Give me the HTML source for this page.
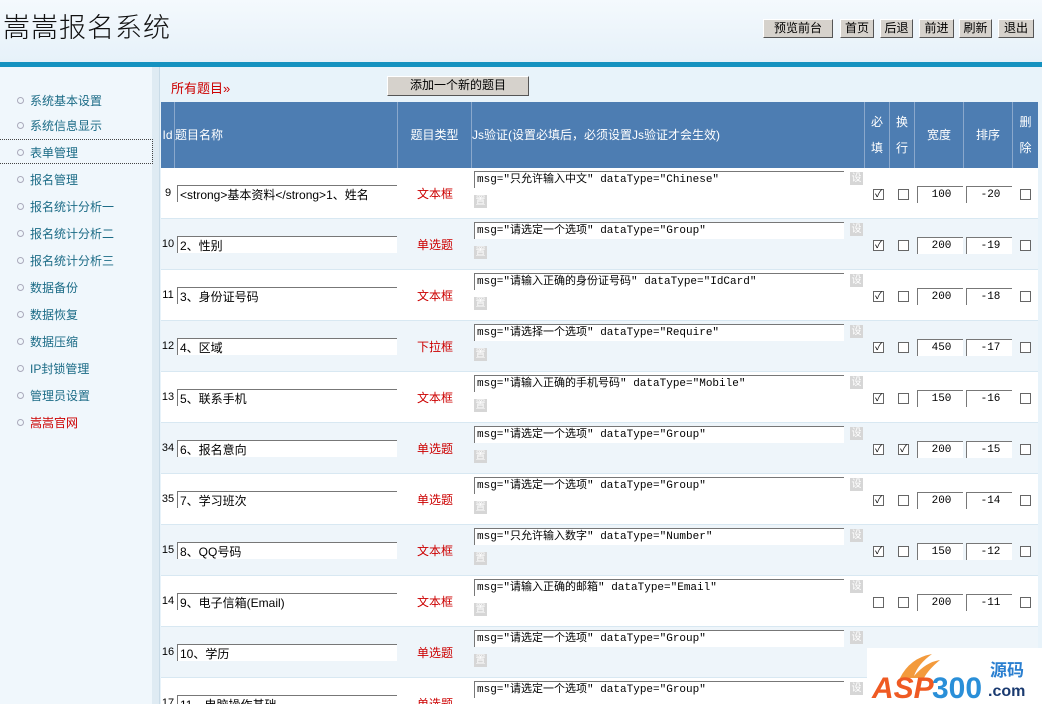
<!DOCTYPE html>
<html style="width:1042px;height:704px;overflow:hidden"><head><meta charset="utf-8"><style>
*{margin:0;padding:0;box-sizing:border-box}
body{width:1042px;height:704px;overflow:hidden;position:relative;background:#e8f3fa;font-family:"Liberation Sans","Noto Sans CJK SC",sans-serif;font-size:12px;color:#000}
.a{position:absolute}
#hd{left:0;top:0;width:1042px;height:62px;background:linear-gradient(#f4f9fd,#e6f1f9)}
#title{left:3px;top:6px;font-size:27px;color:#111;letter-spacing:1px;font-family:"Noto Sans CJK SC",sans-serif;font-weight:300}
.btn{top:19px;height:19px;background:#d6d2cc;border:1px solid #fff;border-right-color:#555;border-bottom-color:#555;font-size:12px;text-align:center;line-height:16px}
#bar{left:0;top:62px;width:1042px;height:5px;background:#1592c0}
#side{left:0;top:67px;width:152px;height:637px;background:#f0f7fc}
#sep{left:152px;top:67px;width:8px;height:637px;background:#dfebf3;border-right:1px solid #c9dbe7}
.mi{left:17px;color:#1b6b86;font-size:12px}
.mi i{display:inline-block;width:7px;height:7px;border:1px solid #aab;border-radius:50%;margin-right:6px;vertical-align:1px}
.row{left:161px;width:877px;height:51px;border-bottom:1px solid #d8e8f2;overflow:hidden}
.w{background:#fff}.l{background:#eef5fa}
.hdr{left:161px;top:102px;width:877px;height:66px;background:#4d7db2;color:#fff}
.hdr div{position:absolute;top:0;height:66px;border-right:1px solid #8aa8cc;display:flex;align-items:center;justify-content:center;text-align:center;line-height:26px}
.in{position:absolute;background:#fff;border-top:1px solid #777;border-left:1px solid #777;height:17px;line-height:16px;padding-left:2px;white-space:nowrap;overflow:hidden;font-family:"Liberation Mono","Noto Sans CJK SC",monospace;font-size:11px}
.nm{padding-top:1px;font-size:12px;font-family:"Liberation Sans","Noto Sans CJK SC",sans-serif}
.cb{position:absolute;width:11px;height:11px;border:1px solid #666;background:#fff;font-size:10px;line-height:9px;text-align:center}
.gb{position:absolute;width:13px;height:13px;background:#d6d6d6;color:#fff;font-size:10px;line-height:13px;text-align:center}
.ty{position:absolute;left:237px;width:74px;top:17px;text-align:center;color:#c00}
.id{position:absolute;left:0;width:14px;top:19px;text-align:center;font-size:11px}
</style></head><body>
<div id="hd" class="a"></div>
<div id="title" class="a">嵩嵩报名系统</div>
<div class="a btn" style="left:763px;width:70px">预览前台</div>
<div class="a btn" style="left:840px;width:34px">首页</div>
<div class="a btn" style="left:880px;width:33px">后退</div>
<div class="a btn" style="left:919px;width:35px">前进</div>
<div class="a btn" style="left:959px;width:33px">刷新</div>
<div class="a btn" style="left:998px;width:36px">退出</div>
<div id="bar" class="a"></div>
<div id="side" class="a"></div>
<div id="sep" class="a"></div>
<div class="a" style="left:0;top:139px;width:153px;height:25px;border:1px dotted #444;border-left:none"></div>
<div class="a mi" style="top:92px"><i></i>系统基本设置</div>
<div class="a mi" style="top:117px"><i></i>系统信息显示</div>
<div class="a mi" style="top:144px"><i></i>表单管理</div>
<div class="a mi" style="top:171px"><i></i>报名管理</div>
<div class="a mi" style="top:198px"><i></i>报名统计分析一</div>
<div class="a mi" style="top:225px"><i></i>报名统计分析二</div>
<div class="a mi" style="top:252px"><i></i>报名统计分析三</div>
<div class="a mi" style="top:279px"><i></i>数据备份</div>
<div class="a mi" style="top:306px"><i></i>数据恢复</div>
<div class="a mi" style="top:333px"><i></i>数据压缩</div>
<div class="a mi" style="top:360px"><i></i>IP封锁管理</div>
<div class="a mi" style="top:387px"><i></i>管理员设置</div>
<div class="a mi" style="top:414px;color:#c00"><i></i>嵩嵩官网</div>
<div class="a" style="left:171px;top:78px;color:#c00;font-size:13px">所有题目»</div>
<div class="a btn" style="left:387px;top:76px;width:142px;height:20px;line-height:17px">添加一个新的题目</div>
<div class="a hdr">
<div style="left:0;width:14px">Id</div>
<div style="left:14px;width:223px;justify-content:flex-start">题目名称</div>
<div style="left:237px;width:74px">题目类型</div>
<div style="left:311px;width:393px;justify-content:flex-start">Js验证(设置必填后，必须设置Js验证才会生效)</div>
<div style="left:704px;width:25px">必<br>填</div>
<div style="left:729px;width:25px">换<br>行</div>
<div style="left:754px;width:49px">宽度</div>
<div style="left:803px;width:49px">排序</div>
<div style="left:852px;width:25px;border:none">删<br>除</div>
</div>

<div class="a row w" style="top:168px"><div class="id">9</div><div class="in nm" style="left:16px;top:17px;width:220px">&lt;strong&gt;基本资料&lt;/strong&gt;1、姓名</div><div class="ty">文本框</div><div class="in" style="left:313px;top:3px;width:370px">msg="只允许输入中文" dataType="Chinese"</div><div class="gb" style="left:689px;top:4px">设</div><div class="gb" style="left:313px;top:27px">置</div><div class="cb" style="left:712px;top:21px">✓</div><div class="cb" style="left:737px;top:21px"></div><div class="in" style="left:756px;top:18px;width:46px;text-align:center">100</div><div class="in" style="left:805px;top:18px;width:46px;text-align:center">-20</div><div class="cb" style="left:859px;top:21px"></div></div>

<div class="a row l" style="top:219px"><div class="id">10</div><div class="in nm" style="left:16px;top:17px;width:220px">2、性别</div><div class="ty">单选题</div><div class="in" style="left:313px;top:3px;width:370px">msg="请选定一个选项" dataType="Group"</div><div class="gb" style="left:689px;top:4px">设</div><div class="gb" style="left:313px;top:27px">置</div><div class="cb" style="left:712px;top:21px">✓</div><div class="cb" style="left:737px;top:21px"></div><div class="in" style="left:756px;top:18px;width:46px;text-align:center">200</div><div class="in" style="left:805px;top:18px;width:46px;text-align:center">-19</div><div class="cb" style="left:859px;top:21px"></div></div>

<div class="a row w" style="top:270px"><div class="id">11</div><div class="in nm" style="left:16px;top:17px;width:220px">3、身份证号码</div><div class="ty">文本框</div><div class="in" style="left:313px;top:3px;width:370px">msg="请输入正确的身份证号码" dataType="IdCard"</div><div class="gb" style="left:689px;top:4px">设</div><div class="gb" style="left:313px;top:27px">置</div><div class="cb" style="left:712px;top:21px">✓</div><div class="cb" style="left:737px;top:21px"></div><div class="in" style="left:756px;top:18px;width:46px;text-align:center">200</div><div class="in" style="left:805px;top:18px;width:46px;text-align:center">-18</div><div class="cb" style="left:859px;top:21px"></div></div>

<div class="a row l" style="top:321px"><div class="id">12</div><div class="in nm" style="left:16px;top:17px;width:220px">4、区域</div><div class="ty">下拉框</div><div class="in" style="left:313px;top:3px;width:370px">msg="请选择一个选项" dataType="Require"</div><div class="gb" style="left:689px;top:4px">设</div><div class="gb" style="left:313px;top:27px">置</div><div class="cb" style="left:712px;top:21px">✓</div><div class="cb" style="left:737px;top:21px"></div><div class="in" style="left:756px;top:18px;width:46px;text-align:center">450</div><div class="in" style="left:805px;top:18px;width:46px;text-align:center">-17</div><div class="cb" style="left:859px;top:21px"></div></div>

<div class="a row w" style="top:372px"><div class="id">13</div><div class="in nm" style="left:16px;top:17px;width:220px">5、联系手机</div><div class="ty">文本框</div><div class="in" style="left:313px;top:3px;width:370px">msg="请输入正确的手机号码" dataType="Mobile"</div><div class="gb" style="left:689px;top:4px">设</div><div class="gb" style="left:313px;top:27px">置</div><div class="cb" style="left:712px;top:21px">✓</div><div class="cb" style="left:737px;top:21px"></div><div class="in" style="left:756px;top:18px;width:46px;text-align:center">150</div><div class="in" style="left:805px;top:18px;width:46px;text-align:center">-16</div><div class="cb" style="left:859px;top:21px"></div></div>

<div class="a row l" style="top:423px"><div class="id">34</div><div class="in nm" style="left:16px;top:17px;width:220px">6、报名意向</div><div class="ty">单选题</div><div class="in" style="left:313px;top:3px;width:370px">msg="请选定一个选项" dataType="Group"</div><div class="gb" style="left:689px;top:4px">设</div><div class="gb" style="left:313px;top:27px">置</div><div class="cb" style="left:712px;top:21px">✓</div><div class="cb" style="left:737px;top:21px">✓</div><div class="in" style="left:756px;top:18px;width:46px;text-align:center">200</div><div class="in" style="left:805px;top:18px;width:46px;text-align:center">-15</div><div class="cb" style="left:859px;top:21px"></div></div>

<div class="a row w" style="top:474px"><div class="id">35</div><div class="in nm" style="left:16px;top:17px;width:220px">7、学习班次</div><div class="ty">单选题</div><div class="in" style="left:313px;top:3px;width:370px">msg="请选定一个选项" dataType="Group"</div><div class="gb" style="left:689px;top:4px">设</div><div class="gb" style="left:313px;top:27px">置</div><div class="cb" style="left:712px;top:21px">✓</div><div class="cb" style="left:737px;top:21px"></div><div class="in" style="left:756px;top:18px;width:46px;text-align:center">200</div><div class="in" style="left:805px;top:18px;width:46px;text-align:center">-14</div><div class="cb" style="left:859px;top:21px"></div></div>

<div class="a row l" style="top:525px"><div class="id">15</div><div class="in nm" style="left:16px;top:17px;width:220px">8、QQ号码</div><div class="ty">文本框</div><div class="in" style="left:313px;top:3px;width:370px">msg="只允许输入数字" dataType="Number"</div><div class="gb" style="left:689px;top:4px">设</div><div class="gb" style="left:313px;top:27px">置</div><div class="cb" style="left:712px;top:21px">✓</div><div class="cb" style="left:737px;top:21px"></div><div class="in" style="left:756px;top:18px;width:46px;text-align:center">150</div><div class="in" style="left:805px;top:18px;width:46px;text-align:center">-12</div><div class="cb" style="left:859px;top:21px"></div></div>

<div class="a row w" style="top:576px"><div class="id">14</div><div class="in nm" style="left:16px;top:17px;width:220px">9、电子信箱(Email)</div><div class="ty">文本框</div><div class="in" style="left:313px;top:3px;width:370px">msg="请输入正确的邮箱" dataType="Email"</div><div class="gb" style="left:689px;top:4px">设</div><div class="gb" style="left:313px;top:27px">置</div><div class="cb" style="left:712px;top:21px"></div><div class="cb" style="left:737px;top:21px"></div><div class="in" style="left:756px;top:18px;width:46px;text-align:center">200</div><div class="in" style="left:805px;top:18px;width:46px;text-align:center">-11</div><div class="cb" style="left:859px;top:21px"></div></div>

<div class="a row l" style="top:627px"><div class="id">16</div><div class="in nm" style="left:16px;top:17px;width:220px">10、学历</div><div class="ty">单选题</div><div class="in" style="left:313px;top:3px;width:370px">msg="请选定一个选项" dataType="Group"</div><div class="gb" style="left:689px;top:4px">设</div><div class="gb" style="left:313px;top:27px">置</div></div>

<div class="a row w" style="top:678px;height:26px;border:none"><div class="id">17</div><div class="in nm" style="left:16px;top:17px;width:220px">11、电脑操作基础</div><div class="ty">单选题</div><div class="in" style="left:313px;top:3px;width:370px">msg="请选定一个选项" dataType="Group"</div><div class="gb" style="left:689px;top:4px">设</div></div>

<div class="a" style="left:867px;top:648px;width:175px;height:56px;background:#fff"></div>
<svg class="a" style="left:870px;top:648px" width="170" height="56">
<path d="M30 30 Q40 10 62 6 Q48 16 44 28 Q56 14 70 12 Q58 22 54 30" fill="#f39a3c"/>
<text x="2" y="50" font-family="Liberation Sans" font-weight="bold" font-style="italic" font-size="30" fill="#ef5a23">ASP</text>
<text x="62" y="50" font-family="Liberation Sans" font-weight="bold" font-size="30" fill="#2a8fd8">300</text>
<text x="120" y="28" font-family="Noto Sans CJK SC" font-weight="bold" font-size="17" fill="#2a7fd0">源码</text>
<text x="118" y="48" font-family="Liberation Sans" font-weight="bold" font-size="16" fill="#1a3a70">.com</text>
</svg>
</body></html>
